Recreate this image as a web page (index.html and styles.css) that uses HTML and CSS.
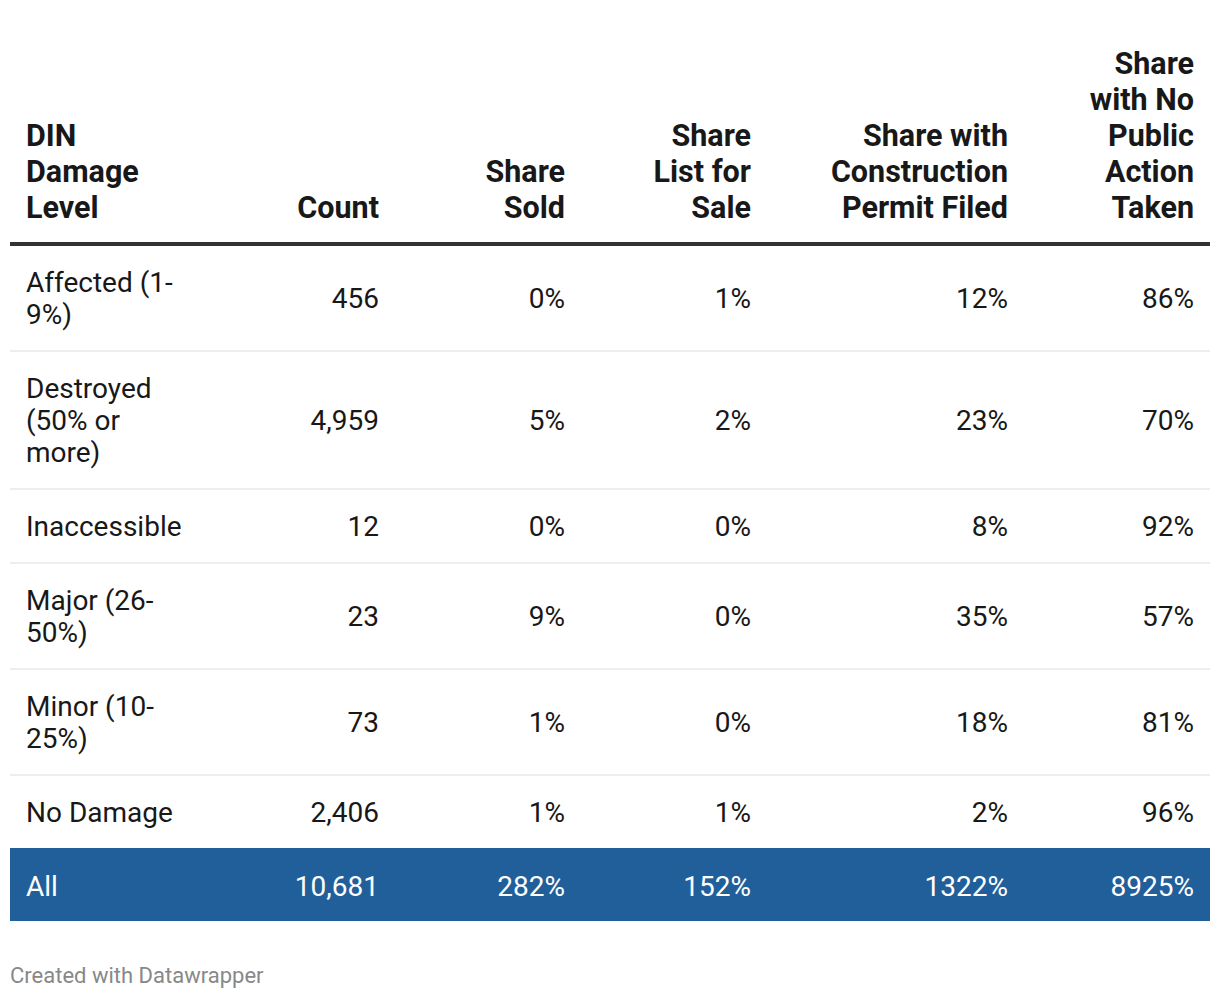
FILE: index.html
```html
<!DOCTYPE html>
<html lang="en">
<head>
<meta charset="utf-8">
<title>DIN Damage Level</title>
<link rel="stylesheet" href="styles.css">
</head>
<body>
<div class="wrap">
  <table class="dw-table">
    <colgroup>
      <col class="c1"><col class="c2"><col class="c3"><col class="c4"><col class="c5"><col class="c6">
    </colgroup>
    <thead>
      <tr>
        <th class="left">DIN<br>Damage<br>Level</th>
        <th>Count</th>
        <th>Share<br>Sold</th>
        <th>Share<br>List for<br>Sale</th>
        <th>Share with<br>Construction<br>Permit Filed</th>
        <th>Share<br>with No<br>Public<br>Action<br>Taken</th>
      </tr>
    </thead>
    <tbody>
      <tr><td class="left">Affected (1-9%)</td><td>456</td><td>0%</td><td>1%</td><td>12%</td><td>86%</td></tr>
      <tr><td class="left">Destroyed (50% or more)</td><td>4,959</td><td>5%</td><td>2%</td><td>23%</td><td>70%</td></tr>
      <tr><td class="left">Inaccessible</td><td>12</td><td>0%</td><td>0%</td><td>8%</td><td>92%</td></tr>
      <tr><td class="left">Major (26-50%)</td><td>23</td><td>9%</td><td>0%</td><td>35%</td><td>57%</td></tr>
      <tr><td class="left">Minor (10-25%)</td><td>73</td><td>1%</td><td>0%</td><td>18%</td><td>81%</td></tr>
      <tr class="last"><td class="left">No Damage</td><td>2,406</td><td>1%</td><td>1%</td><td>2%</td><td>96%</td></tr>
      <tr class="total"><td class="left">All</td><td>10,681</td><td>282%</td><td>152%</td><td>1322%</td><td>8925%</td></tr>
    </tbody>
  </table>
  <div class="footer">Created with Datawrapper</div>
</div>
</body>
</html>
```
FILE: styles.css
```css
html, body {
  margin: 0;
  padding: 0;
  background: #ffffff;
}

body {
  font-family: Roboto, "Liberation Sans", Arial, sans-serif;
  color: #181818;
}

.wrap {
  padding: 35px 10px 0 10px;
}

.dw-table {
  width: 1200px;
  border-collapse: collapse;
  table-layout: fixed;
}

.c1 { width: 199px; }
.c2 { width: 186px; }
.c3 { width: 186px; }
.c4 { width: 186px; }
.c5 { width: 257px; }
.c6 { width: 186px; }

.dw-table th {
  font-weight: 700;
  font-size: 30.5px;
  line-height: 36px;
  text-align: right;
  vertical-align: bottom;
  padding: 11px 16px 16px 16px;
  border-bottom: 4px solid #333333;
}

.dw-table td {
  font-size: 28px;
  line-height: 32px;
  text-align: right;
  vertical-align: middle;
  padding: 21px 16px 19px 16px;
  border-bottom: 2px solid #eeeeee;
}

.dw-table .left {
  text-align: left;
  padding-left: 16px;
}

.dw-table tr.last td {
  border-bottom: none;
}

.dw-table tr.total td {
  background: #215f9b;
  color: #ffffff;
  padding-top: 23px;
  padding-bottom: 18px;
  border-bottom: none;
}

.footer {
  margin-top: 42px;
  font-size: 22px;
  line-height: 26px;
  color: #888888;
}
```
